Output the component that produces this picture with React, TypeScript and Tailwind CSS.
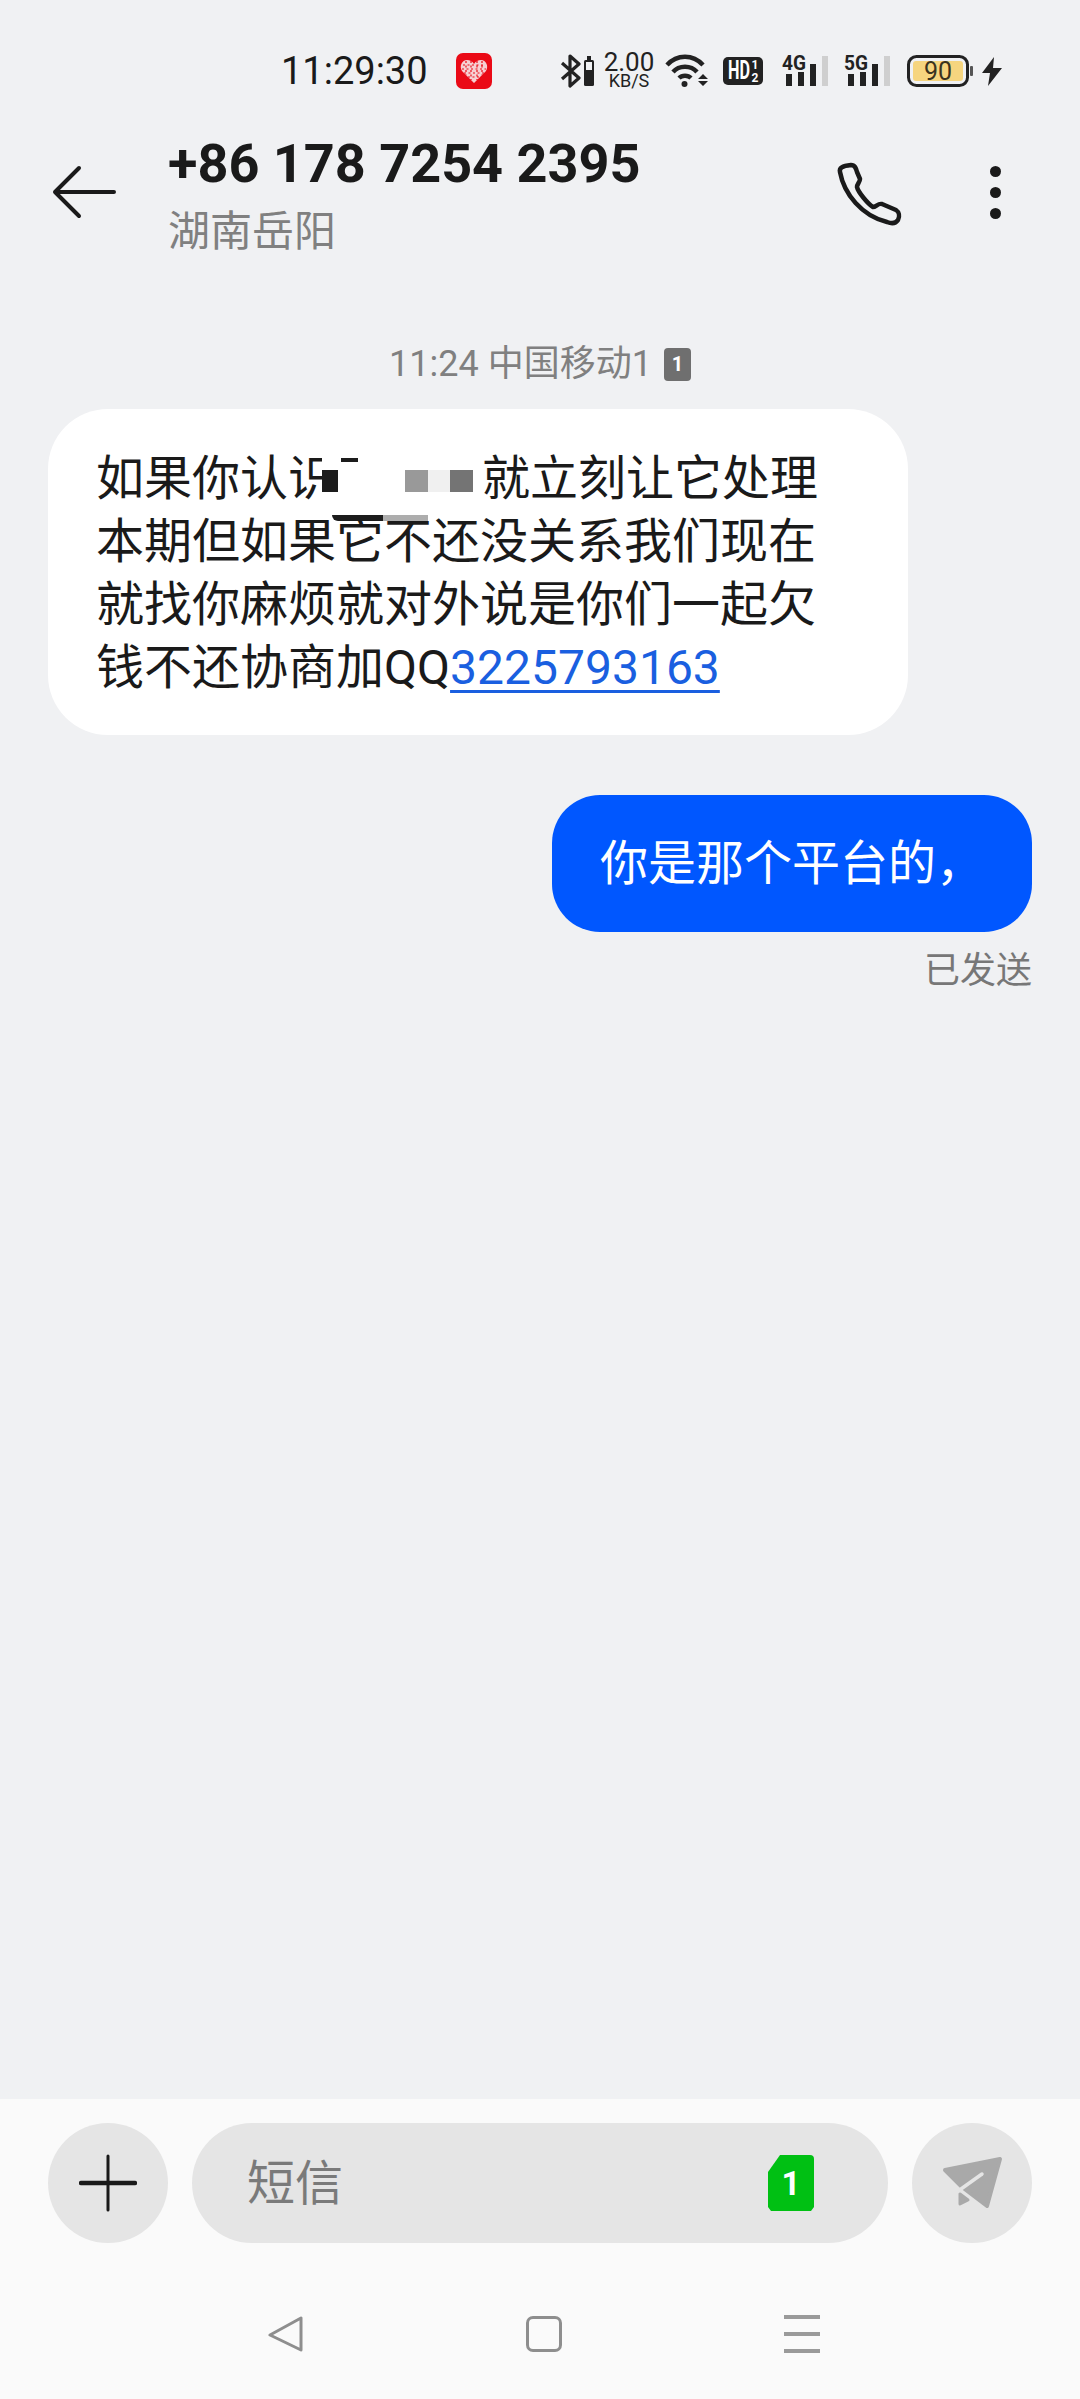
export default function App() {
  return (
    <div className="flex h-[2399px] w-[1080px] flex-col overflow-hidden bg-[#f0f1f3] font-['Roboto','Noto_Sans_CJK_SC',sans-serif] text-[#1a1a1a]">
      <StatusBar />

      {/* Header */}
      <div className="flex h-[124px] items-center">
        <svg className="ml-[52px] h-[54px] w-[64px]" viewBox="0 0 64 54" fill="none" stroke="#1a1a1a" strokeWidth="4" strokeLinecap="round" strokeLinejoin="round">
          <path d="M27 3 L3 27 L27 51 M3 27 H62" />
        </svg>
        <div className="ml-[52px] flex flex-col">
          <div className="mt-[10px] text-[54px] leading-[62px] font-bold whitespace-nowrap">+86 178 7254 2395</div>
          <div className="mt-[8px] text-[42px] leading-[58px] text-[#808080]">湖南岳阳</div>
        </div>
        <svg className="ml-auto h-[80px] w-[80px]" viewBox="0 0 80 80" fill="none" stroke="#1a1a1a" strokeWidth="4.5" strokeLinejoin="round">
          <path d="M10 20 C9 16 12 14 21 13 C25 13 26 16 27 20 L30 27 C30 30 27 32 27 35 C28 40 38 52 43 55 C46 55 48 51 52 52 L66 58 C69 60 70 64 68 68 C66 71 62 72 57 70 C32 64 14 42 10 20 Z" />
        </svg>
        <div className="mr-[79px] ml-[80px] flex flex-col gap-[10px]">
          <div className="h-[11px] w-[11px] rounded-full bg-[#1a1a1a]" />
          <div className="h-[11px] w-[11px] rounded-full bg-[#1a1a1a]" />
          <div className="h-[11px] w-[11px] rounded-full bg-[#1a1a1a]" />
        </div>
      </div>

      {/* Conversation */}
      <div className="flex flex-1 flex-col">
        <div className="mt-[89px] flex h-[42px] items-center justify-center text-[36px] text-[#808080]">
          <span>11:24 中国移动1</span>
          <span className="ml-[12px] flex h-[33px] w-[27px] items-center justify-center rounded-[4px] bg-[#6f6f6f] text-[20px] font-bold text-white">1</span>
        </div>

        <div className="relative mt-[24px] ml-[48px] w-[860px] rounded-[60px] bg-white pt-[38px] pb-[36px] pl-[48px] text-[48px] leading-[63px] whitespace-nowrap">
          如果你认识<span className="inline-block w-[146px]" />就立刻让它处理
          <br />
          本期但如果它不还没关系我们现在
          <br />
          就找你麻烦就对外说是你们一起欠
          <br />
          钱不还协商加QQ
          <span className="text-[#1a5fe0] underline decoration-[3px] underline-offset-[6px]">3225793163</span>
          {/* redaction patches over the first two lines */}
          <div className="absolute top-[41px] left-[274px] h-[65px] w-[160px] bg-white" />
          <div className="absolute top-[61px] left-[274px] h-[22px] w-[16px] bg-[#1c1c1c]" />
          <div className="absolute top-[49px] left-[293px] h-[4px] w-[17px] bg-[#1c1c1c]" />
          <div className="absolute top-[61px] left-[357px] flex h-[22px]">
            <div className="w-[23px] bg-[#999999]" />
            <div className="w-[22px] bg-[#f0f0f0]" />
            <div className="w-[23px] bg-[#747474]" />
          </div>
          <div className="absolute top-[106px] left-[284px] flex h-[6px]">
            <div className="w-[51px] rounded-bl-[24px] bg-[#1c1c1c]" />
            <div className="w-[45px] bg-[#adadad]" />
          </div>
        </div>

        <div className="mt-[60px] mr-[48px] self-end rounded-[48px] bg-[#0057ff] px-[48px] py-[37px] text-[48px] leading-[63px] text-white">
          你是那个平台的，
        </div>
        <div className="mt-[17px] mr-[48px] self-end text-[36px] leading-[44px] text-[#777777]">已发送</div>
      </div>

      {/* Composer and navigation */}
      <div className="flex h-[300px] flex-col bg-[#fafafa] pt-[24px]">
        <div className="flex gap-[24px] px-[48px]">
          <div className="flex h-[120px] w-[120px] items-center justify-center rounded-full bg-[#e5e5e5]">
            <svg className="h-[58px] w-[58px]" viewBox="0 0 58 58" stroke="#1a1a1a" strokeLinecap="round">
              <path d="M29 2 V56" strokeWidth="3" />
              <path d="M2 29 H56" strokeWidth="4.5" />
            </svg>
          </div>
          <div className="flex h-[120px] flex-1 items-center rounded-full bg-[#e5e5e5] pr-[74px] pl-[55px]">
            <span className="mt-[2px] text-[48px] text-[#7a7a7a]">短信</span>
            <svg className="ml-auto h-[56px] w-[46px]" viewBox="0 0 46 56">
              <path d="M12 0 H42 Q46 0 46 4 V52 L43 56 H3 L0 52 V17 Z" fill="#00c013" />
              <text x="23" y="40" textAnchor="middle" fontSize="33" fontWeight="700" fill="#ffffff" fontFamily="Roboto">1</text>
            </svg>
          </div>
          <div className="h-[120px] w-[120px] rounded-full bg-[#e5e5e5]">
            <svg className="h-[120px] w-[120px]" viewBox="0 0 120 120">
              <path d="M88 36 L33 47 L50 64 L75 83 Z" fill="#a9a9a9" stroke="#a9a9a9" strokeWidth="4" strokeLinejoin="round" />
              <path d="M48 71 L48 81 L56 77 Z" fill="#a9a9a9" stroke="#a9a9a9" strokeWidth="3" strokeLinejoin="round" />
              <path d="M70 51 L49 66" stroke="#e5e5e5" strokeWidth="3.5" strokeLinecap="round" />
            </svg>
          </div>
        </div>

        <div className="mt-[72px] flex items-center pl-[268px]">
          <svg className="h-[36px] w-[36px]" viewBox="0 0 36 36" fill="none" stroke="#8e8e8e" strokeWidth="3" strokeLinejoin="round">
            <path d="M33 2 V34 L2 19 Z" />
          </svg>
          <div className="ml-[222px] h-[36px] w-[36px] rounded-[7px] border-[3px] border-[#8e8e8e]" />
          <div className="ml-[222px] flex flex-col gap-[13px]">
            <div className="h-[4px] w-[36px] bg-[#9a9a9a]" />
            <div className="h-[4px] w-[36px] bg-[#9a9a9a]" />
            <div className="h-[4px] w-[36px] bg-[#9a9a9a]" />
          </div>
        </div>
      </div>
    </div>
  );
}

function SignalIcon({ label }: { label: string }) {
  return (
    <svg className="h-[34px] w-[46px] overflow-visible" viewBox="0 0 46 34">
      <text x="0" y="16" fontSize="21" fontWeight="700" fill="#222222" fontFamily="Roboto" textLength="24" lengthAdjust="spacingAndGlyphs">{label}</text>
      <rect x="4" y="20" width="6" height="12" fill="#222222" />
      <rect x="16" y="18" width="6" height="14" fill="#222222" />
      <rect x="28" y="10" width="6" height="22" fill="#222222" />
      <rect x="40" y="2" width="6" height="30" fill="#cfcfcf" />
    </svg>
  );
}

function StatusBar() {
  return (
    <div className="flex h-[130px] items-start pt-[53px] pl-[281px]">
      <div className="flex h-[36px] items-center">
        <span className="w-[146px] text-[38px] leading-none whitespace-nowrap">11:29:30</span>
        <svg className="ml-[29px] h-[36px] w-[36px]" viewBox="0 0 36 36">
          <rect width="36" height="36" rx="7" fill="#ea0a16" />
          <path d="M18 30 L6 18 C3 13 6 7 11 7 C14 7 16 8 18 11 C20 8 22 7 25 7 C30 7 33 13 30 18 Z" fill="#f6cfd2" />
          <path d="M7 12 H29 M6 16 H30 M8 20 H28 M12 24 H24 M10 8 V22 M15 8 V27 M21 8 V27 M26 8 V22" stroke="#ea0a16" strokeWidth="1.2" strokeDasharray="2 2.5" />
        </svg>
        <svg className="ml-[68px] h-[34px] w-[36px]" viewBox="0 0 36 34" fill="none">
          <path d="M2 9 L19 24 L10 32 V2 L19 10 L2 25" stroke="#222222" strokeWidth="3.2" strokeLinejoin="round" />
          <rect x="24" y="6" width="10" height="26" rx="1.5" fill="#222222" />
          <rect x="27" y="2" width="4" height="4" fill="#222222" />
          <rect x="26" y="8" width="6" height="8" fill="#f0f1f3" />
        </svg>
        <div className="ml-[8px] flex w-[50px] flex-col items-center text-[#222222]">
          <span className="text-[26px] leading-[19px]">2.00</span>
          <span className="text-[18px] leading-[17px]">KB/S</span>
        </div>
        <svg className="ml-[11px] h-[34px] w-[44px]" viewBox="0 0 44 34" fill="none" stroke="#222222" strokeWidth="4.4">
          <path d="M2 11 C12 0 28 0 38 11" />
          <path d="M8 18 C14 11 26 11 32 18" />
          <path d="M14 24 C17 21 23 21 26 24" />
          <circle cx="19.5" cy="30" r="3" fill="#222222" stroke="none" />
          <path d="M38 20 L43 25 H33 Z M33 27 H43 L38 32 Z" fill="#222222" stroke="none" />
        </svg>
        <svg className="ml-[14px] h-[28px] w-[40px]" viewBox="0 0 40 28">
          <rect width="40" height="28" rx="5" fill="#222222" />
          <text x="5" y="22" fontSize="25" fontWeight="700" fill="#ffffff" fontFamily="Roboto" textLength="22" lengthAdjust="spacingAndGlyphs">HD</text>
          <text x="32" y="11.5" textAnchor="middle" fontSize="12" fontWeight="700" fill="#ffffff" fontFamily="Roboto">1</text>
          <text x="32" y="25" textAnchor="middle" fontSize="12" fontWeight="700" fill="#ffffff" fontFamily="Roboto">2</text>
        </svg>
        <div className="ml-[19px]">
          <SignalIcon label="4G" />
        </div>
        <div className="ml-[16px]">
          <SignalIcon label="5G" />
        </div>
        <svg className="ml-[17px] h-[32px] w-[66px]" viewBox="0 0 66 32">
          <rect x="1.5" y="1.5" width="59" height="29" rx="8" fill="none" stroke="#222222" strokeWidth="3" />
          <rect x="6" y="6" width="50" height="20" rx="3" fill="#f6d57f" />
          <rect x="63" y="11" width="3" height="10" rx="1" fill="#555555" />
          <text x="31" y="25" textAnchor="middle" fontSize="25" fill="#3a3320" fontFamily="Roboto">90</text>
        </svg>
        <svg className="ml-[9px] h-[29px] w-[20px]" viewBox="0 0 20 29">
          <path d="M12 0 L0 16 H8 L6 29 L20 11 H11 Z" fill="#222222" />
        </svg>
      </div>
    </div>
  );
}
